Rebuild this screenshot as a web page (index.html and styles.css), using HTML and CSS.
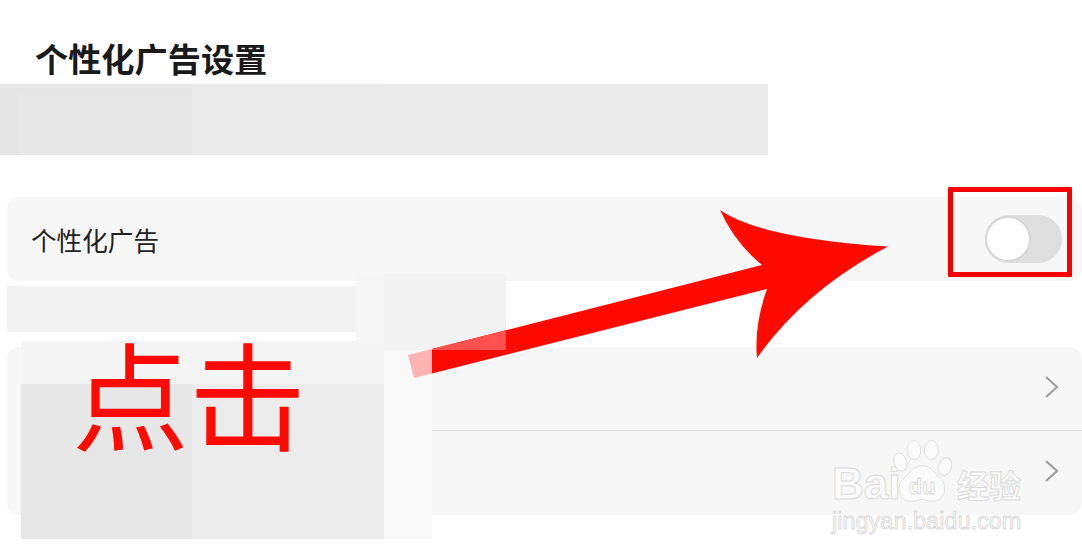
FILE: index.html
```html
<!DOCTYPE html>
<html lang="zh">
<head>
<meta charset="utf-8">
<title>个性化广告设置</title>
<link rel="stylesheet" href="styles.css">
</head>
<body>
<main class="page">
  <h1 class="title">个性化广告设置</h1>
  <div class="band">
    <div class="band-cell band-a"></div>
    <div class="band-cell band-b"></div>
    <div class="band-cell band-c"></div>
    <div class="band-cell band-d"></div>
  </div>
  <section class="card card-single">
    <span class="label">个性化广告</span>
    <span class="toggle"><span class="knob"></span></span>
  </section>
  <div class="note"></div>
  <section class="card card-list">
    <div class="row row-divided">
      <svg class="chev" viewBox="0 0 14 22"><path d="M1 1l11 10L1 21"/></svg>
    </div>
    <div class="row">
      <svg class="chev" viewBox="0 0 14 22"><path d="M1 1l11 10L1 21"/></svg>
    </div>
  </section>
</main>

<div class="patch patch-upper-l"></div>
<div class="patch patch-upper-r"></div>
<div class="patch patch-top"></div>
<div class="patch patch-low-l"></div>
<div class="patch patch-low-r"></div>
<div class="patch patch-side"></div>

<div class="watermark">
  <span class="wm-bai">Bai</span>
  <svg class="wm-paw" viewBox="0 0 70 72">
    <ellipse cx="9" cy="24" rx="7" ry="10" transform="rotate(-20 9 24)"/>
    <ellipse cx="24" cy="11" rx="7.5" ry="10.500"/>
    <ellipse cx="43" cy="11" rx="7.5" ry="10.500"/>
    <ellipse cx="58" cy="29" rx="7" ry="10" transform="rotate(20 58 29)"/>
    <path d="M33 28c10 0 14 9 21 15 7 7 4 24-10 24-5 0-7-2-11-2s-7 2-12 2C7 67 4 50 12 43c7-6 11-15 21-15z"/>
    <text x="33" y="59" class="wm-du">du</text>
  </svg>
  <span class="wm-cn">经验</span>
  <span class="wm-url">jingyan.baidu.com</span>
</div>

<svg class="annot" viewBox="0 0 1082 555">
  <path class="red" d="M432 349.100L762 265Q735 243 720 210Q760 238 888 246.500Q805 290 757 358Q754 325 767 289L432 373.500z"/>
  <path class="red-mid" d="M432 349.100L506 330.300V350H432z"/>
  <path class="red-pale" d="M408 355L432 349.100V373.500L414 378z"/>
</svg>
<div class="redbox"></div>
<div class="click">点击</div>
</body>
</html>
```
FILE: styles.css
```css
* { box-sizing: border-box; }
html, body { margin: 0; padding: 0; background: #fff; }
body {
  width: 1082px;
  height: 555px;
  overflow: hidden;
  position: relative;
  font-family: "Noto Sans CJK SC", "Liberation Sans", sans-serif;
}
.page { display: flex; flex-direction: column; }
.title {
  margin: 33px 0 0 35px;
  height: 51px;
  font-size: 33.200px;
  line-height: 49px;
  font-weight: 700;
  color: #1a1a1a;
}
.band { display: grid; grid-template-columns: 19px 173px 192px 384px; width: 768px; height: 71px; }
.band-a { background: #e6e6e6; }
.band-b { background: #e8e8e8; border-top: 10px solid #e6e6e6; }
.band-c { background: #ebebeb; border-top: 10px solid #e9e9e9; }
.band-d { background: #ebebeb; }
.card { margin-left: 7px; background: #f7f7f7; border-radius: 12px; }
.card-single {
  margin-top: 42px;
  height: 84px;
  padding: 0 20px 0 24px;
  display: flex;
  align-items: center;
  justify-content: space-between;
}
.label { font-size: 25.600px; line-height: 1; color: #222; margin-top: 2px; }
.toggle {
  width: 77px;
  height: 48px;
  border-radius: 24px;
  background: #dedede;
  display: flex;
  align-items: center;
}
.knob {
  width: 46px;
  height: 46px;
  border-radius: 50%;
  background: #fff;
  border: 2px solid #d6d6d6;
}
.note { margin: 5px 0 0 7px; width: 349px; height: 46px; background: #f2f2f2; }
.card-list { margin-top: 15px; height: 168px; display: flex; flex-direction: column; }
.row { flex: 1; display: flex; align-items: center; justify-content: flex-end; padding-right: 23px; }
.row-divided { position: relative; }
.row-divided::after {
  content: "";
  position: absolute;
  left: 425px;
  right: 0;
  bottom: 0;
  height: 1px;
  background: #e3e3e3;
}
.chev { width: 14px; height: 22px; margin-bottom: 4px; fill: none; stroke: #a0a0a0; stroke-width: 2.200; }
.patch { position: absolute; }
.patch-upper-l { left: 356px; top: 274px; width: 28px; height: 76px; background: #f6f6f6; }
.patch-upper-r { left: 384px; top: 274px; width: 122px; height: 76px; background: #f3f3f3; }
.patch-top { left: 21px; top: 341px; width: 363px; height: 43px; background: #f5f5f5; }
.patch-low-l { left: 21px; top: 384px; width: 171px; height: 155px; background: #e7e7e7; }
.patch-low-r { left: 192px; top: 384px; width: 192px; height: 155px; background: #ececec; }
.patch-side { left: 384px; top: 350px; width: 48px; height: 189px; background: #f9f9f9; }
.annot { position: absolute; left: 0; top: 0; width: 1082px; height: 555px; }
.red { fill: #fe0a00; }
.red-mid { fill: #ff5050; }
.red-pale { fill: #ffb3b3; }
.redbox {
  position: absolute;
  left: 948px;
  top: 187px;
  width: 124px;
  height: 90px;
  border: 5px solid #f90000;
  border-radius: 1px;
}
.click {
  position: absolute;
  left: 72px;
  top: 311px;
  font-size: 117px;
  line-height: 160px;
  color: #fe0a00;
  white-space: nowrap;
}
.watermark { position: absolute; left: 832px; top: 440px; width: 195px; height: 95px; color: #fbfbfb; }
.wm-bai, .wm-cn, .wm-url { position: absolute; -webkit-text-stroke: 1px #dcdcdc; white-space: nowrap; }
.wm-bai { left: 0; top: 20px; font: 700 44px/48px "Liberation Sans", sans-serif; }
.wm-cn { left: 125px; top: 26px; font-size: 32px; line-height: 36px; font-weight: 700; }
.wm-url { left: 0; top: 67px; font: 400 23.500px/28px "Liberation Sans", sans-serif; }
.wm-paw { position: absolute; left: 60px; top: 0; width: 64px; height: 66px; fill: #fbfbfb; stroke: #dcdcdc; stroke-width: 1; }
.wm-du { font: 700 24px "Liberation Sans", sans-serif; text-anchor: middle; }
```
